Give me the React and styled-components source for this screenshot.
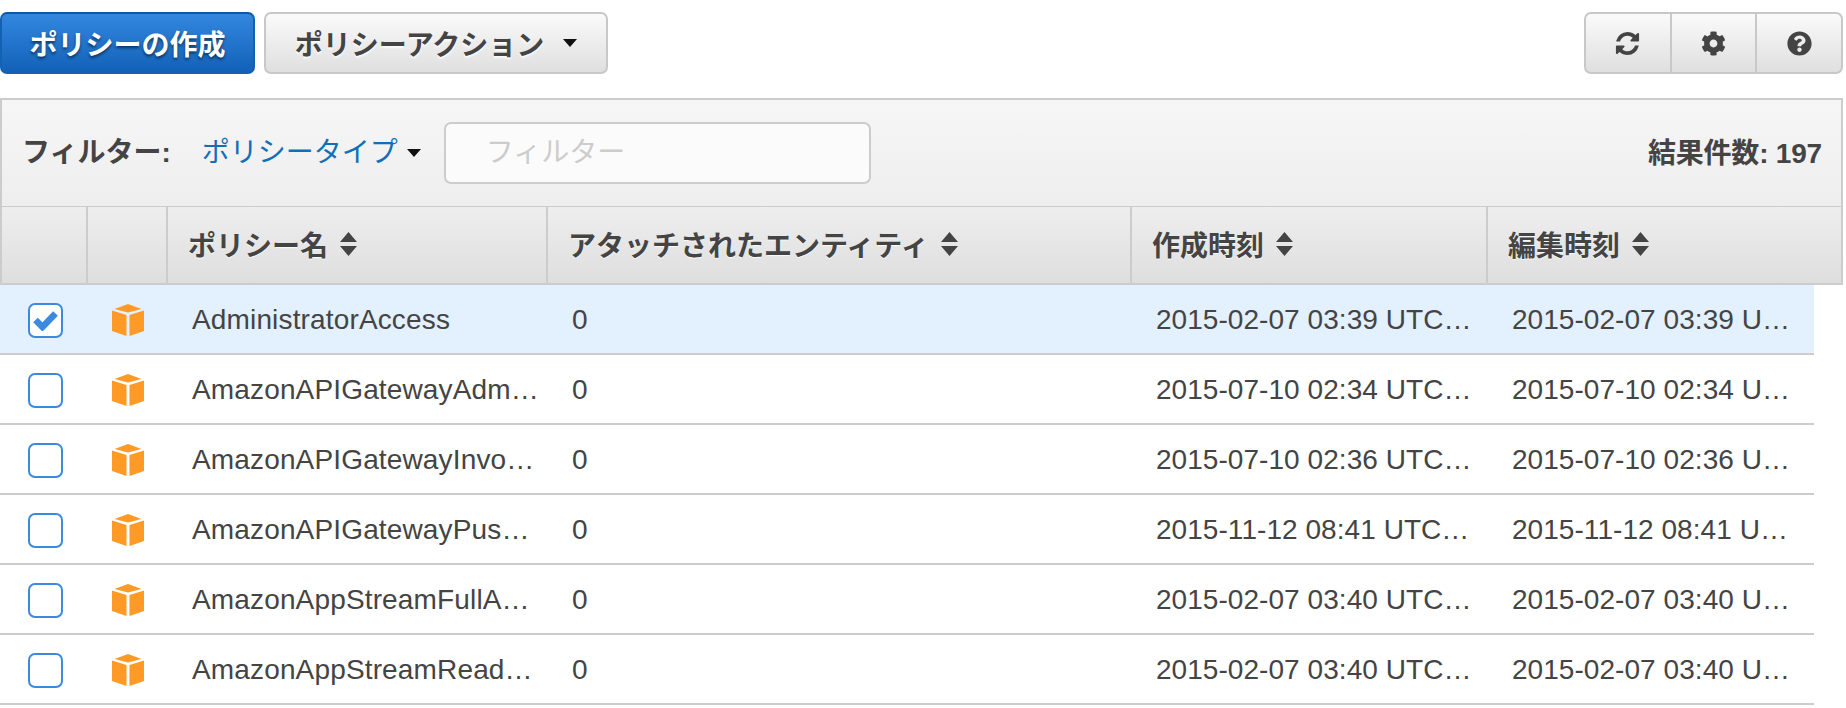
import React from "react";
import styled, { createGlobalStyle } from "styled-components";
import { FaCog, FaQuestionCircle } from "react-icons/fa";

const GlobalStyle = createGlobalStyle`
  html, body {
    margin: 0;
    padding: 0;
    background: #fff;
  }
  body {
    font-family: "Liberation Sans", "Noto Sans CJK JP", sans-serif;
    font-size: 28px;
    color: #444;
  }
`;

const Page = styled.div`
  width: 1846px;
  height: 708px;
  overflow: hidden;
  padding-top: 12px;
  box-sizing: border-box;
`;

const Toolbar = styled.div`
  display: flex;
  justify-content: space-between;
  height: 62px;
  padding-right: 3px;
  margin-bottom: 24px;
`;

const ButtonRow = styled.div`
  display: flex;
  gap: 9px;
`;

const Button = styled.button`
  display: flex;
  align-items: center;
  justify-content: center;
  box-sizing: border-box;
  height: 62px;
  padding: 0;
  font: inherit;
  font-weight: 700;
  white-space: nowrap;
  border-radius: 7px;
  ${(p) =>
    p.$primary
      ? `
    width: 255px;
    color: #fff;
    border: 2px solid #1361b4;
    border-top-color: #0c57a8;
    background: linear-gradient(#3387df, #1261b8);
    text-shadow: 0 2px 3px rgba(0, 0, 0, 0.55);
  `
      : `
    width: 344px;
    color: #444;
    border: 2px solid #c8c8c8;
    background: linear-gradient(#fafafa, #dfdfdf);
    text-shadow: 0 2px 2px rgba(255, 255, 255, 0.8);
  `}
`;

const Caret = styled.span`
  display: inline-block;
  width: 0;
  height: 0;
  margin-left: ${(p) => p.$gap}px;
  border-left: 7px solid transparent;
  border-right: 7px solid transparent;
  border-top: 8px solid #111;
`;

const IconGroup = styled.div`
  display: flex;
  box-sizing: border-box;
  width: 259px;
  height: 62px;
  border: 2px solid #c8c8c8;
  border-radius: 7px;
  background: linear-gradient(#fafafa, #dfdfdf);
`;

const IconButton = styled.div`
  flex: 1;
  display: flex;
  align-items: center;
  justify-content: center;
  color: #444;
  font-size: 25px;
  & + & {
    border-left: 2px solid #c8c8c8;
  }
`;

const Panel = styled.div`
  margin-right: 3px;
`;

const FilterBar = styled.div`
  display: flex;
  align-items: center;
  box-sizing: border-box;
  height: 110px;
  padding: 0 19px 0 20px;
  border: 2px solid #ccc;
  background: linear-gradient(#f6f6f6, #eeeeee);
`;

const FilterLabel = styled.span`
  font-weight: 700;
  margin: 0 31px 6px 0;
`;

const FilterLink = styled.span`
  color: #0f6fb8;
  margin-bottom: 6px;
`;

const FilterInput = styled.input`
  box-sizing: border-box;
  width: 427px;
  height: 62px;
  margin-left: 23px;
  padding: 0 40px;
  font: inherit;
  color: #444;
  border: 2px solid #ccc;
  border-radius: 7px;
  background: #fbfbfb;
  outline: none;
  &::placeholder {
    color: #ccc;
    opacity: 1;
  }
`;

const ResultCount = styled.span`
  margin: 0 0 4px auto;
  font-weight: 700;
  letter-spacing: -0.2px;
`;

const HeaderRow = styled.div`
  display: grid;
  grid-template-columns: 86px 80px 380px 584px 356px 1fr;
  box-sizing: border-box;
  height: 78px;
  margin-top: -1px;
  border-bottom: 2px solid #ccc;
  border-left: 2px solid #ccc;
  border-right: 2px solid #ccc;
  background: linear-gradient(#eeeeee, #dedede);
`;

const HeaderCell = styled.div`
  display: flex;
  align-items: center;
  gap: 12px;
  padding: 0 0 2px 20px;
  font-weight: 700;
  white-space: nowrap;
  border-right: ${(p) => (p.$last ? "none" : "2px solid #ccc")};
  text-shadow: 0 1px 1px rgba(255, 255, 255, 0.8);
`;

const Row = styled.div`
  display: grid;
  grid-template-columns: 88px 80px 380px 584px 356px 1fr;
  box-sizing: border-box;
  width: 1814px;
  height: 70px;
  padding-top: 2px;
  align-items: center;
  letter-spacing: 0.15px;
  border-bottom: 2px solid #ccc;
  background: ${(p) => (p.$selected ? "#e3f0fd" : "#fff")};
`;

const CheckCell = styled.div`
  padding-left: 28px;
  display: flex;
`;

const Check = styled.span`
  display: flex;
  align-items: center;
  justify-content: center;
  box-sizing: border-box;
  width: 35px;
  height: 35px;
  border: 2px solid #3a8ade;
  border-radius: 7px;
  background: #fff;
`;

const IconCell = styled.div`
  padding-left: 24px;
  display: flex;
`;

const TextCell = styled.div`
  padding: 0 ${(p) => p.$right}px 0 24px;
  white-space: nowrap;
  overflow: hidden;
  text-overflow: ellipsis;
  min-width: 0;
  letter-spacing: ${(p) => (p.$date ? "0.05px" : "inherit")};
`;

function SortIcon() {
  return (
    <svg width="17" height="24" viewBox="0 0 17 24">
      <path d="M8.5 0L17 10H0Z M0 14H17L8.5 24Z" fill="#444" />
    </svg>
  );
}

function CubeIcon() {
  return (
    <svg width="32" height="32" viewBox="0 0 32 32">
      <path
        d="M16 0L29.5 5L16 8.5L2.5 5Z M0 6.5L14.5 11V32L0 27Z M17.5 11L32 6.5V27L17.5 32Z"
        fill="#ff9a26"
      />
    </svg>
  );
}

function CheckMark() {
  return (
    <svg width="27" height="22" viewBox="0 0 27 22">
      <path d="M3.5 11L10.5 18L23.5 4.5" fill="none" stroke="#3a8ade" strokeWidth="6.5" />
    </svg>
  );
}

function RefreshIcon() {
  return (
    <svg width="27" height="27" viewBox="0 0 1792 1792">
      <path
        fill="#444"
        d="M1639 1056q0 5-1 7-64 268-268 434.5t-478 166.5q-146 0-282.5-55t-243.5-157l-129 129q-19 19-45 19t-45-19-19-45v-448q0-26 19-45t45-19h448q26 0 45 19t19 45-19 45l-137 137q71 66 161 102t187 36q134 0 250-65t186-179q11-17 53-117 8-23 30-23h192q13 0 22.5 9.5t9.5 22.5zm25-800v448q0 26-19 45t-45 19h-448q-26 0-45-19t-19-45 19-45l138-138q-148-137-349-137-134 0-250 65t-186 179q-11 17-53 117-8 23-30 23h-199q-13 0-22.5-9.5t-9.5-22.5v-7q65-268 270-434.5t480-166.5q146 0 284 55.5t245 156.5l130-129q19-19 45-19t45 19 19 45z"
      />
    </svg>
  );
}

const rows = [
  ["AdministratorAccess", "2015-02-07 03:39"],
  ["AmazonAPIGatewayAdministrator", "2015-07-10 02:34"],
  ["AmazonAPIGatewayInvokeFullAccess", "2015-07-10 02:36"],
  ["AmazonAPIGatewayPushToCloudWatchLogs", "2015-11-12 08:41"],
  ["AmazonAppStreamFullAccess", "2015-02-07 03:40"],
  ["AmazonAppStreamReadOnlyAccess", "2015-02-07 03:40"],
];

const columns = ["ポリシー名", "アタッチされたエンティティ", "作成時刻", "編集時刻"];

export default function App() {
  return (
    <Page>
      <GlobalStyle />
      <Toolbar>
        <ButtonRow>
          <Button $primary>ポリシーの作成</Button>
          <Button>
            ポリシーアクション
            <Caret $gap={19} />
          </Button>
        </ButtonRow>
        <IconGroup>
          <IconButton><RefreshIcon /></IconButton>
          <IconButton><FaCog /></IconButton>
          <IconButton><FaQuestionCircle /></IconButton>
        </IconGroup>
      </Toolbar>
      <Panel>
        <FilterBar>
          <FilterLabel>フィルター:</FilterLabel>
          <FilterLink>ポリシータイプ</FilterLink>
          <Caret $gap={9} />
          <FilterInput placeholder="フィルター" readOnly />
          <ResultCount>結果件数: 197</ResultCount>
        </FilterBar>
        <HeaderRow>
          <HeaderCell />
          <HeaderCell />
          {columns.map((name, i) => (
            <HeaderCell key={name} $last={i === columns.length - 1}>
              {name}
              <SortIcon />
            </HeaderCell>
          ))}
        </HeaderRow>
      </Panel>
      {rows.map(([name, date], i) => (
        <Row key={name} $selected={i === 0}>
          <CheckCell>
            <Check>{i === 0 && <CheckMark />}</Check>
          </CheckCell>
          <IconCell>
            <CubeIcon />
          </IconCell>
          <TextCell $right={9}>{name}</TextCell>
          <TextCell $right={0}>0</TextCell>
          <TextCell $date $right={14}>{date} UTC+0900</TextCell>
          <TextCell $date $right={20}>{date} UTC+0900</TextCell>
        </Row>
      ))}
    </Page>
  );
}
